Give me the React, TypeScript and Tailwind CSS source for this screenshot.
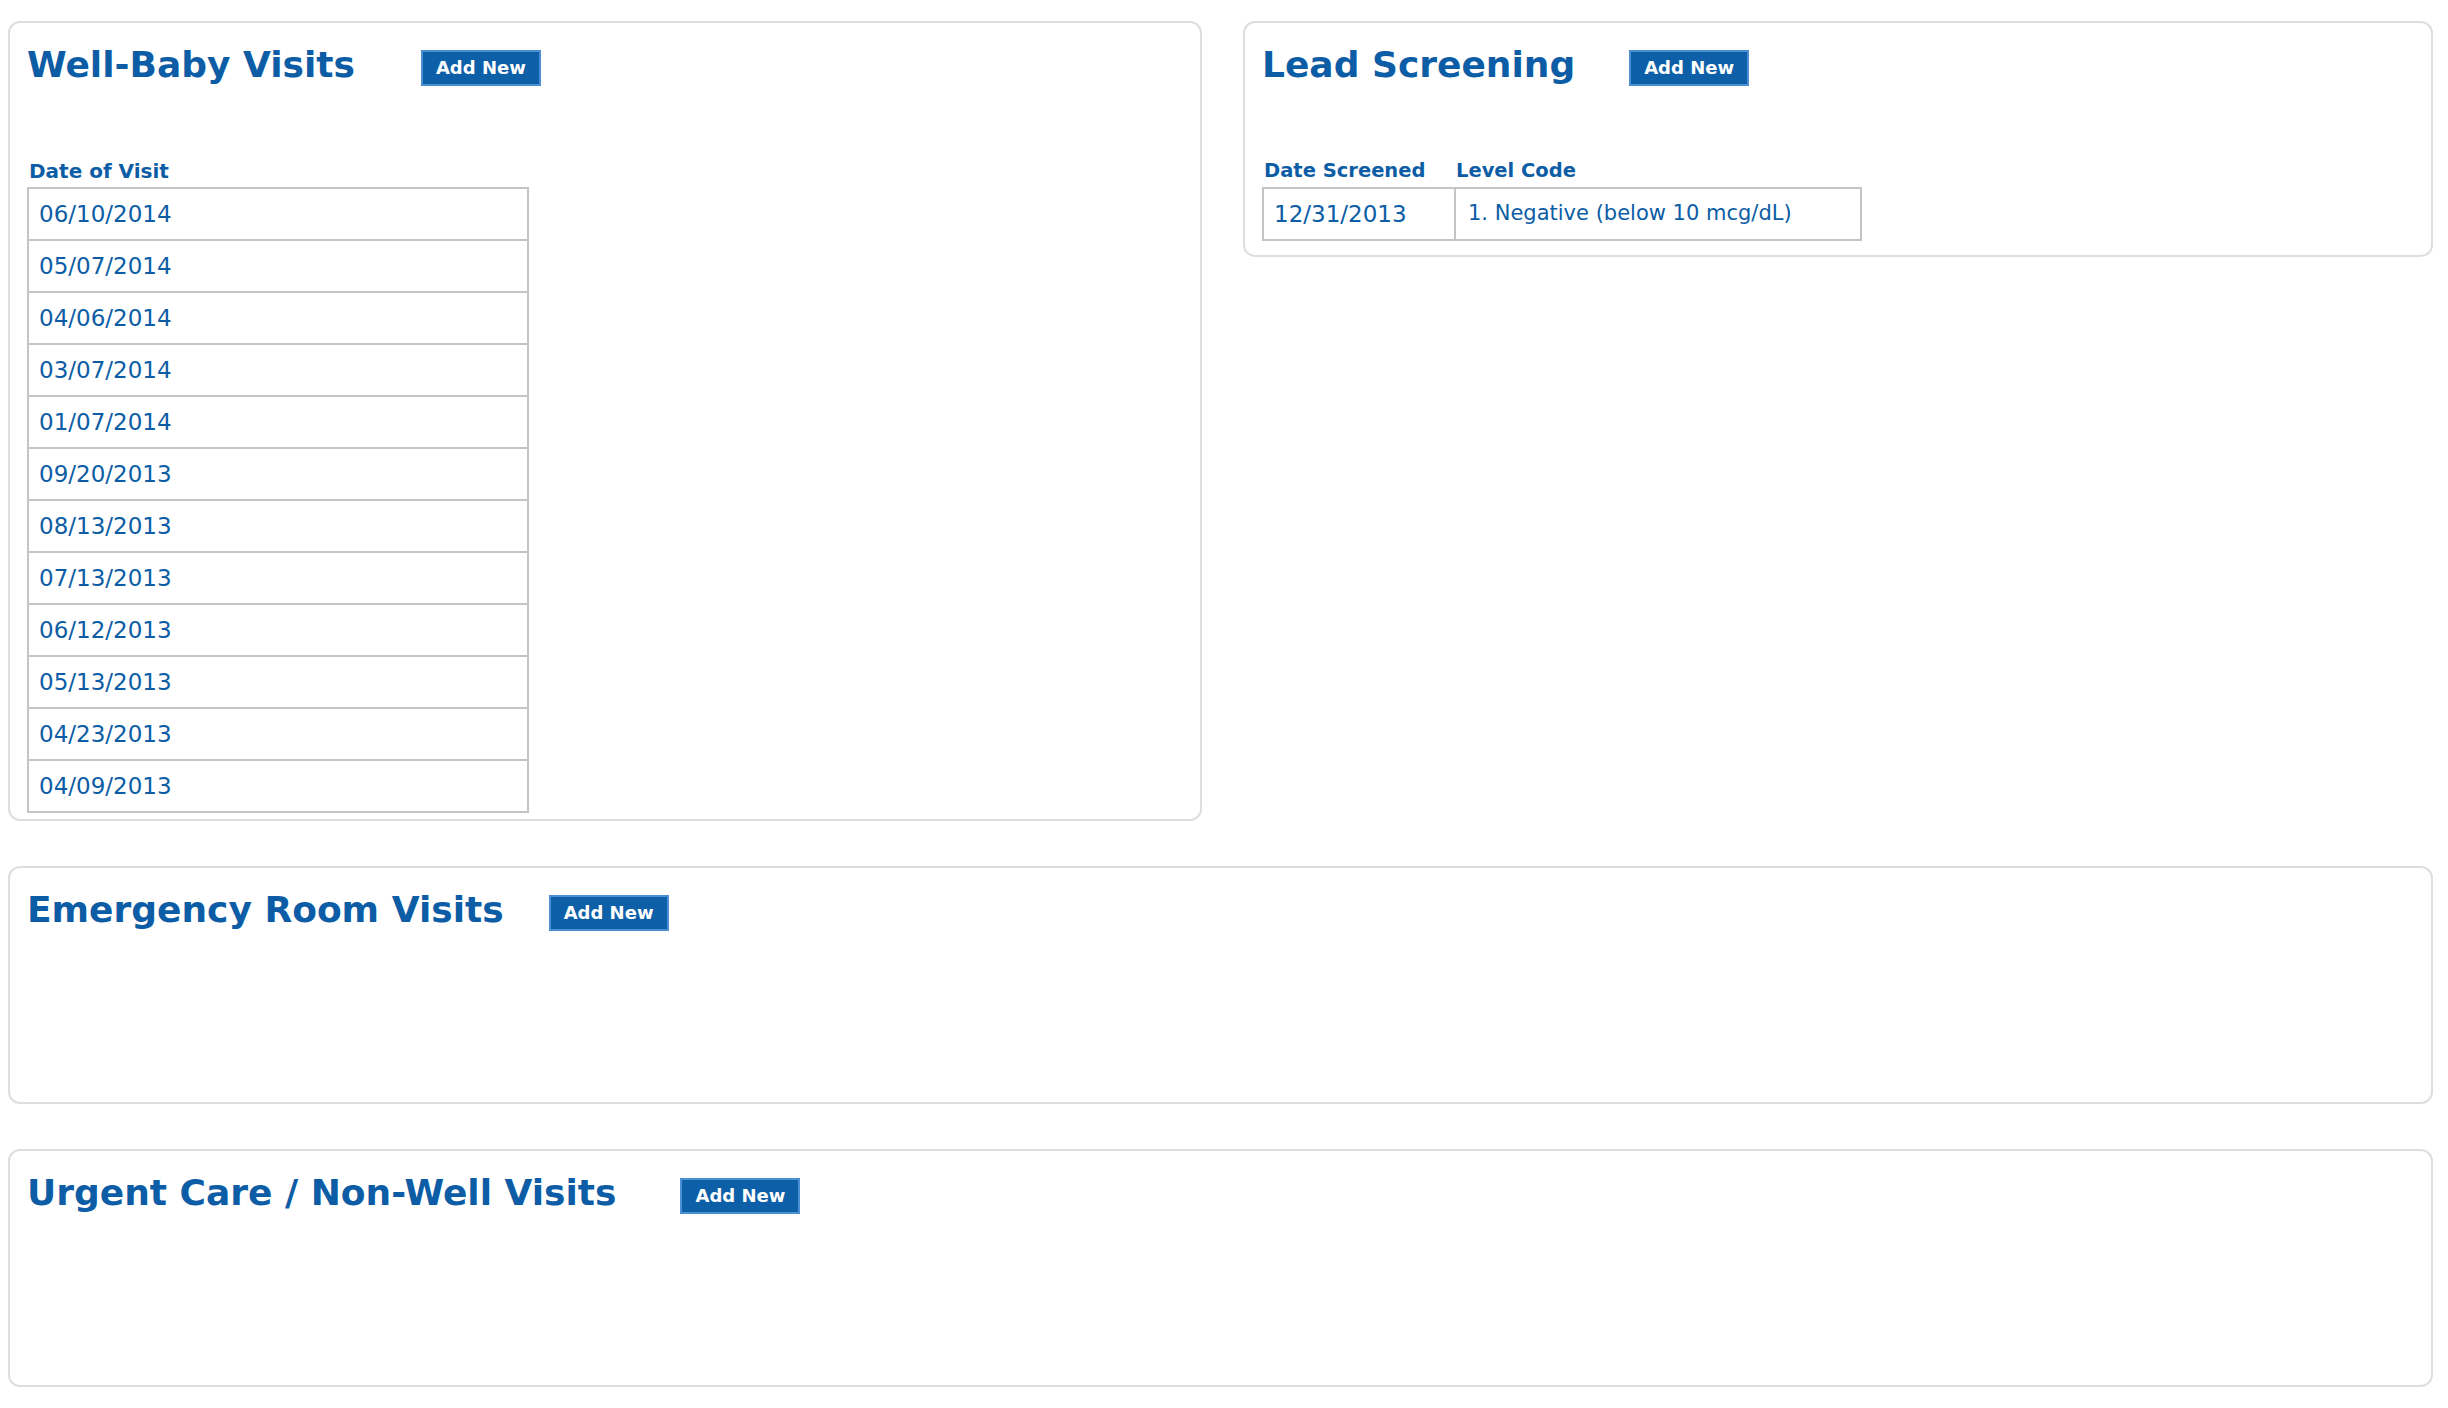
import React from 'react';

const visits = [
  '06/10/2014',
  '05/07/2014',
  '04/06/2014',
  '03/07/2014',
  '01/07/2014',
  '09/20/2013',
  '08/13/2013',
  '07/13/2013',
  '06/12/2013',
  '05/13/2013',
  '04/23/2013',
  '04/09/2013',
];

function AddNew() {
  return (
    <button className="mt-[7px] h-[36px] px-[13px] border-2 border-[#4b8fd5] bg-[#0d5fa8] text-white text-[18px] font-bold leading-none">
      Add New
    </button>
  );
}

function PanelHeader({ title, gap }: { title: string; gap: string }) {
  return (
    <div className="flex items-start">
      <h2 className={`text-[36px] leading-[44px] font-bold text-[#0c5da5] ${gap}`}>{title}</h2>
      <AddNew />
    </div>
  );
}

function Panel({ children, className = '' }: { children: React.ReactNode; className?: string }) {
  return (
    <div className={`border-2 border-[#dedede] rounded-[12px] px-[17px] pt-[20px] pb-[6px] bg-white ${className}`}>
      {children}
    </div>
  );
}

export default function App() {
  return (
    <div className="w-[2448px] h-[1408px] bg-white pl-[8px] pr-[15px] pt-[21px] font-['DejaVu_Sans',sans-serif] text-[#0c5da5]">
      <div className="flex flex-col gap-[45px]">
        <div className="flex items-start gap-[41px]">
          <Panel className="w-[1194px] min-h-[236px]">
            <PanelHeader title="Well-Baby Visits" gap="mr-[66px]" />
            <div className="mt-[72px] text-[20px] font-bold leading-[24px] pl-[2px] pb-[4px]">Date of Visit</div>
            <div className="w-[502px] border-2 border-[#c4c4c4]">
              {visits.map((d, i) => (
                <div
                  key={d}
                  className={`flex items-center pl-[10px] text-[23px] ${i > 0 ? 'h-[52px] border-t-2 border-[#c4c4c4]' : 'h-[50px]'}`}
                >
                  {d}
                </div>
              ))}
            </div>
          </Panel>

          <Panel className="flex-1 min-h-[236px]">
            <PanelHeader title="Lead Screening" gap="mr-[54px]" />
            <div className="mt-[72px] w-[600px] grid grid-cols-[192px_1fr] text-[19.5px] font-bold leading-[24px] pb-[4px]">
              <div className="pl-[2px]">Date Screened</div>
              <div className="pl-[2px]">Level Code</div>
            </div>
            <div className="w-[600px] border-2 border-[#c4c4c4] grid grid-cols-[190px_1fr]">
              <div className="h-[50px] flex items-center pl-[10px] text-[23px]">12/31/2013</div>
              <div className="h-[50px] flex items-center pl-[12px] border-l-2 border-[#c4c4c4] text-[21px]">
                1. Negative (below 10 mcg/dL)
              </div>
            </div>
          </Panel>
        </div>

        <Panel className="min-h-[238px]">
          <PanelHeader title="Emergency Room Visits" gap="mr-[45px]" />
        </Panel>

        <Panel className="min-h-[238px]">
          <PanelHeader title="Urgent Care / Non-Well Visits" gap="mr-[64px]" />
        </Panel>
      </div>
    </div>
  );
}
